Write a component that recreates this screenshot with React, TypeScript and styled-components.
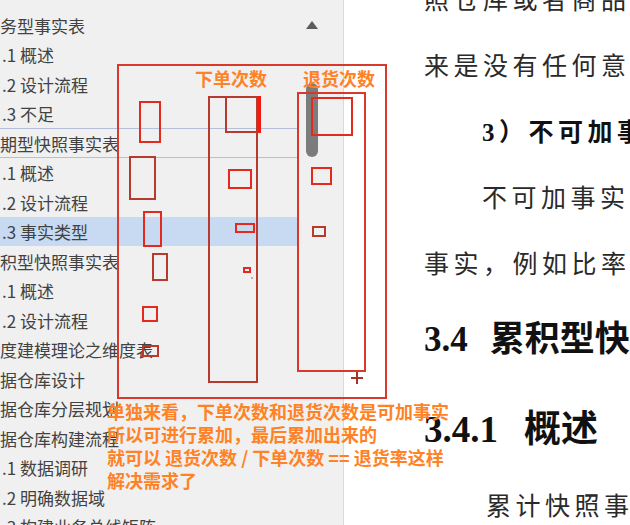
import React from "react";
import styled, { createGlobalStyle } from "styled-components";

const GlobalStyle = createGlobalStyle`
  html, body { margin: 0; padding: 0; background: #ffffff; overflow: hidden; }
  * { box-sizing: border-box; }
`;

const Screen = styled.div`
  position: relative;
  width: 630px;
  height: 525px;
  display: flex;
  overflow: hidden;
  font-family: "Noto Sans CJK SC", "Noto Sans", sans-serif;
`;

const Sidebar = styled.aside`
  width: 343px;
  flex: none;
  display: flex;
  background: #f0f0f0;
`;

const Outline = styled.ul`
  width: 297px;
  margin: 0;
  padding: 10.25px 0 0 0;
  list-style: none;
  display: flex;
  flex-direction: column;
  overflow: hidden;
`;

const Row = styled.li<{ $indent: number; $selected?: boolean; $focused?: boolean }>`
  height: 29.5px;
  flex: none;
  display: flex;
  align-items: center;
  padding-left: ${(p) => p.$indent}px;
  font-size: 17px;
  color: #424242;
  white-space: nowrap;
  background: ${(p) => (p.$selected ? "#c7daf2" : "transparent")};
  border-top: 1px solid ${(p) => (p.$focused ? "#b6bfd9" : "transparent")};
  border-bottom: 1px solid ${(p) => (p.$focused ? "#b6bfd9" : "transparent")};
`;

const ScrollColumn = styled.div`
  width: 46px;
  flex: none;
  display: flex;
  flex-direction: column;
  padding: 21px 0 0 9px;
`;

const UpArrow = styled.div`
  width: 0;
  height: 0;
  border-left: 6px solid transparent;
  border-right: 6px solid transparent;
  border-bottom: 8px solid #5c5c5c;
`;

const Thumb = styled.div`
  width: 12px;
  height: 74px;
  margin-top: 54px;
  border-radius: 6px;
  background: #7c7c7c;
`;

const Doc = styled.main`
  flex: 1;
  min-width: 0;
  background: #ffffff;
  border-left: 1px solid #dadada;
  padding-left: 80px;
  overflow: hidden;
  color: #1e1e1e;
  font-family: "Liberation Serif", "Noto Sans CJK SC", serif;
`;

const Line = styled.div<{ $h: number; $indent?: number; $bold?: boolean; $top?: number }>`
  height: ${(p) => p.$h}px;
  line-height: ${(p) => p.$h}px;
  margin-top: ${(p) => p.$top ?? 0}px;
  padding-left: ${(p) => p.$indent ?? 0}px;
  font-size: 25px;
  letter-spacing: 4.5px;
  font-weight: ${(p) => (p.$bold ? 700 : 400)};
  white-space: nowrap;
  color: ${(p) => (p.$bold ? "#111" : "#2a2a2a")};
`;

const Heading = styled.div<{ $h: number; $size: number; $gap: number }>`
  height: ${(p) => p.$h}px;
  line-height: ${(p) => p.$h}px;
  font-size: ${(p) => p.$size}px;
  font-weight: 700;
  white-space: nowrap;
  color: #111;
  display: flex;
  gap: ${(p) => p.$gap}px;
`;

const Overlay = styled.div`
  position: absolute;
  inset: 0;
  pointer-events: none;
`;

const Sketch = styled.svg`
  position: absolute;
  left: 0;
  top: 0;
`;

const Label = styled.span<{ $x: number; $y: number }>`
  position: absolute;
  left: ${(p) => p.$x}px;
  top: ${(p) => p.$y}px;
  font-size: 18px;
  line-height: 24px;
  font-weight: 700;
  color: #ff8226;
  white-space: nowrap;
`;

const Note = styled.div`
  position: absolute;
  left: 107px;
  top: 400px;
  font-size: 18px;
  line-height: 23px;
  font-weight: 700;
  color: #ff8226;
  white-space: nowrap;
`;

type Item = { text: string; indent: number; selected?: boolean; focused?: boolean };

const items: Item[] = [
  { text: "务型事实表", indent: 0 },
  { text: ".1 概述", indent: 2 },
  { text: ".2 设计流程", indent: 2 },
  { text: ".3 不足", indent: 2 },
  { text: "期型快照事实表", indent: 0, focused: true },
  { text: ".1 概述", indent: 2 },
  { text: ".2 设计流程", indent: 2 },
  { text: ".3 事实类型", indent: 2, selected: true },
  { text: "积型快照事实表", indent: 0 },
  { text: ".1 概述", indent: 2 },
  { text: ".2 设计流程", indent: 2 },
  { text: "度建模理论之维度表", indent: 0 },
  { text: "据仓库设计", indent: 0 },
  { text: "据仓库分层规划", indent: 0 },
  { text: "据仓库构建流程", indent: 0 },
  { text: ".1 数据调研", indent: 2 },
  { text: ".2 明确数据域", indent: 2 },
  { text: ".3 构建业务总线矩阵", indent: 2 },
];

type Box = [number, number, number, number, string];

const BRIGHT = "#e42a1c";
const DARK = "#b8392d";

const boxes: Box[] = [
  [117, 64, 387, 399, "#d8392a"],
  [208, 96, 258, 383, DARK],
  [225, 96, 261, 133, DARK],
  [297, 92, 366, 372, "#d8392a"],
  [311, 97, 353, 136, BRIGHT],
  [139, 101, 161, 143, BRIGHT],
  [129, 156, 156, 200, DARK],
  [143, 211, 162, 247, BRIGHT],
  [152, 253, 168, 281, DARK],
  [142, 306, 158, 322, BRIGHT],
  [142, 345, 159, 357, DARK],
  [228, 169, 252, 189, BRIGHT],
  [235, 223, 255, 233, BRIGHT],
  [243, 267, 251, 273, BRIGHT],
  [311, 167, 332, 185, BRIGHT],
  [312, 226, 326, 237, DARK],
];

export default function App() {
  return (
    <>
      <GlobalStyle />
      <Screen>
        <Sidebar>
          <Outline>
            {items.map((it, i) => (
              <Row key={i} $indent={it.indent} $selected={it.selected} $focused={it.focused}>
                {it.text}
              </Row>
            ))}
          </Outline>
          <ScrollColumn>
            <UpArrow />
            <Thumb />
          </ScrollColumn>
        </Sidebar>
        <Doc>
          <Line $h={66} $top={-32}>照仓库或者商品</Line>
          <Line $h={66}>来是没有任何意</Line>
          <Line $h={66} $indent={58} $bold>3）不可加事实</Line>
          <Line $h={66} $indent={58}>不可加事实</Line>
          <Line $h={66}>事实，例如比率</Line>
          <Heading $h={84} $size={35} $gap={22}>
            <span>3.4</span>
            <span>累积型快照事实表</span>
          </Heading>
          <Heading $h={96} $size={37} $gap={26}>
            <span>3.4.1</span>
            <span>概述</span>
          </Heading>
          <Line $h={58} $indent={62}>累计快照事</Line>
        </Doc>
        <Overlay>
          <Sketch width={630} height={525} viewBox="0 0 630 525">
            {boxes.map(([x1, y1, x2, y2, c], i) => (
              <rect
                key={i}
                x={x1 + 1}
                y={y1 + 1}
                width={x2 - x1 - 2}
                height={y2 - y1 - 2}
                fill="none"
                stroke={c}
                strokeWidth={2}
              />
            ))}
            <line x1={259.5} y1={96} x2={259.5} y2={133} stroke="#f01a10" strokeWidth={3} />
            <line x1={351} y1={378} x2={363} y2={378} stroke="#a8322a" strokeWidth={2} />
            <line x1={357} y1={372} x2={357} y2={384} stroke="#a8322a" strokeWidth={2} />
            <circle cx={252} cy={278} r={0.8} fill="#b8392d" />
          </Sketch>
          <Label $x={195} $y={66}>下单次数</Label>
          <Label $x={303} $y={66}>退货次数</Label>
          <Note>
            <div>单独来看，下单次数和退货次数是可加事实</div>
            <div>所以可进行累加，最后累加出来的</div>
            <div>就可以 退货次数 / 下单次数 == 退货率这样</div>
            <div>解决需求了</div>
          </Note>
        </Overlay>
      </Screen>
    </>
  );
}
